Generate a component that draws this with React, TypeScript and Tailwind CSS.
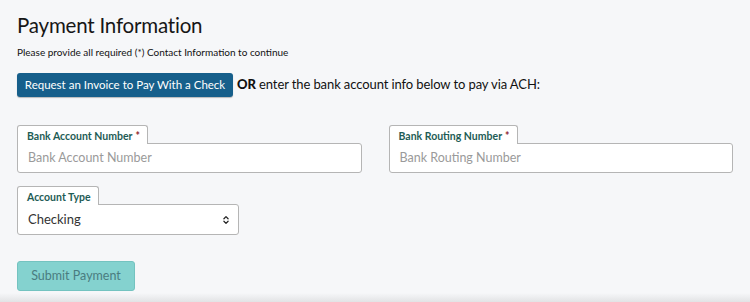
import { ChevronsUpDown } from 'lucide-react';

function FieldTab({ label, required }: { label: string; required?: boolean }) {
  return (
    <div className="relative z-10 -mb-px h-[19px] w-fit whitespace-nowrap rounded-t-[3px] border border-b-0 border-[#b5b5b5] bg-white pl-[9px] pr-[7px] pt-[3px] text-[10.5px] font-bold leading-[14px] text-[#1e5c55]">
      {label}
      {required ? <span className="ml-[3px] text-[#8e1b2e]">*</span> : null}
    </div>
  );
}

function TabField({ label, required, placeholder }: { label: string; required?: boolean; placeholder: string }) {
  return (
    <div className="flex flex-col">
      <FieldTab label={label} required={required} />
      <div className="flex h-[30px] items-center rounded-b-[3px] rounded-tr-[3px] border border-[#b5b5b5] bg-white px-[10px] text-[12.5px] text-[#9a9a9a]">
        {placeholder}
      </div>
    </div>
  );
}

export default function App() {
  return (
    <div
      className="flex h-[302px] w-[750px] flex-col bg-[#f6f7f9] text-[#111]"
      style={{ fontFamily: 'Lato, "Open Sans", sans-serif' }}
    >
      <div className="flex flex-col px-[17px]">
        <h1 className="mt-[12px] text-[20.5px] leading-[26px] tracking-[-0.2px] text-[#161616]">Payment Information</h1>
        <p className="mt-[8px] text-[10px] leading-[12px]">
          Please provide all required (*) Contact Information to continue
        </p>
        <div className="mt-[15px] flex items-center gap-[4px]">
          <button
            type="button"
            className="h-[24px] w-[216px] rounded-[3px] bg-[#165f8b] text-[11.5px] text-white shadow-[0_1px_1px_rgba(0,0,0,0.25)]"
          >
            Request an Invoice to Pay With a Check
          </button>
          <span className="text-[13px] tracking-[-0.1px]">
            <b className="font-black">OR</b> enter the bank account info below to pay via ACH:
          </span>
        </div>

        <div className="mt-[28px] grid grid-cols-2 gap-x-[27px]">
          <TabField label="Bank Account Number" required placeholder="Bank Account Number" />
          <TabField label="Bank Routing Number" required placeholder="Bank Routing Number" />
        </div>

        <div className="mt-[13px] flex w-[222px] flex-col">
          <FieldTab label="Account Type" />
          <div className="flex h-[31px] items-center justify-between rounded-b-[3px] rounded-tr-[3px] border border-[#b5b5b5] bg-white pl-[10px] pr-[7px] text-[13px] text-[#333]">
            Checking
            <ChevronsUpDown className="h-[10px] w-[10px] text-[#222]" strokeWidth={3} />
          </div>
        </div>

        <button
          type="button"
          className="mt-[26px] h-[30px] w-[118px] rounded-[3px] border border-[#74c3c0] bg-[#84d2cf] text-[12.5px] text-[#4a7c80]"
        >
          Submit Payment
        </button>
      </div>
      <div className="mt-auto h-[9px] bg-gradient-to-b from-[#f6f7f9] to-[#e2e3e5]" />
    </div>
  );
}
